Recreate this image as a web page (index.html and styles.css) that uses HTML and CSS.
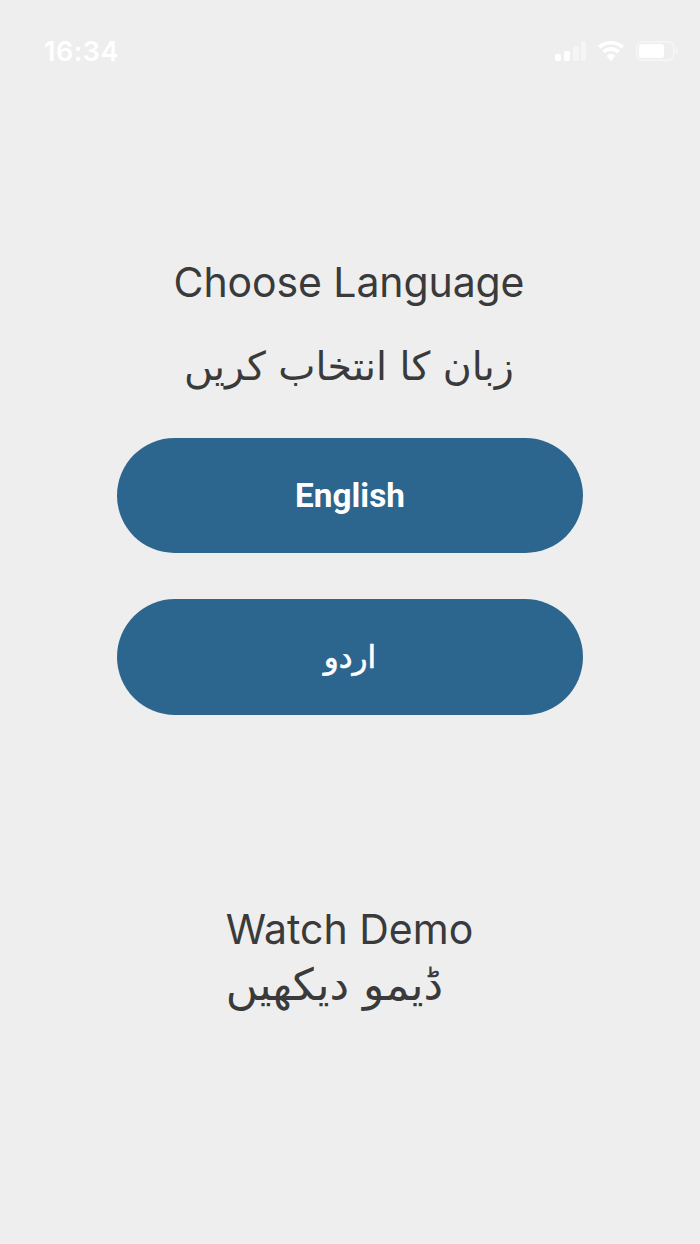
FILE: index.html
```html
<!DOCTYPE html>
<html lang="ur">
<head>
    <meta charset="UTF-8">
    <title>Choose Language</title>
    <link rel="stylesheet" href="styles.css">
</head>
<body>
    <!-- status bar -->
    <div class="status-bar">
        <span class="time">16:34</span>
        <div class="status-icons">
            <svg width="31" height="20" viewBox="0 0 31 20">
                <rect x="0" y="13" width="6" height="7" rx="1.500" fill="#fff"/>
                <rect x="9" y="10" width="6" height="10" rx="1.500" fill="#fff"/>
                <rect x="18" y="5" width="6" height="15" rx="1.500" fill="#fff" opacity="0.4"/>
                <rect x="26" y="0" width="5" height="20" rx="1.500" fill="#fff" opacity="0.4"/>
            </svg>
            <svg width="28" height="21" viewBox="0 0 28 21">
                <path d="M14 3.500c4 0 7.500 1.500 10.400 4.200l2.600-2.900C23.600 1.800 19 0 14 0S4.400 1.800 1 4.800l2.600 2.900C6.500 5 10 3.500 14 3.500z" fill="#fff"/>
                <path d="M14 10c2.400 0 4.600.9 6.200 2.400l2.600-2.900C20.400 7.300 17.400 6 14 6S7.600 7.300 5.200 9.500l2.600 2.900C9.400 10.900 11.600 10 14 10z" fill="#fff"/>
                <path d="M14 13c-1.700 0-3.200.6-4.400 1.700L14 20.500l4.400-5.800C17.200 13.600 15.700 13 14 13z" fill="#fff"/>
            </svg>
            <svg width="42" height="20" viewBox="0 0 42 20">
                <rect x="0.750" y="0.750" width="37" height="18.500" rx="5.500" fill="none" stroke="#fff" stroke-opacity="0.5" stroke-width="1.500"/>
                <rect x="3" y="3" width="25" height="14" rx="3" fill="#fff"/>
                <path d="M40 7c1.200.4 2 1.600 2 3s-.8 2.600-2 3z" fill="#fff" opacity="0.5"/>
            </svg>
        </div>
    </div>

    <div class="content">
        <h1 class="title">Choose Language</h1>
        <h2 class="title-urdu">زبان کا انتخاب کریں</h2>

        <div class="buttons">
            <button class="lang-btn">English</button>
            <button class="lang-btn lang-btn-urdu">اردو</button>
        </div>

        <div class="demo">
            <div class="demo-en">Watch Demo</div>
            <div class="demo-ur">ڈیمو دیکھیں</div>
        </div>
    </div>
</body>
</html>
```

FILE: styles.css
```css
* { box-sizing: border-box; }
html, body { margin: 0; padding: 0; }
body { width: 700px; height: 1244px; overflow: hidden; background: #eeeeee; color: #3a3a3a; font-family: Inter, "Noto Sans", "DejaVu Sans", sans-serif; }

.status-bar { height: 102px; padding: 37px 22px 0 44px; display: flex; justify-content: space-between; align-items: flex-start; }
.time { color: #fff; font-size: 27px; line-height: 30px; font-weight: 600; letter-spacing: 0.5px; }
.status-icons { display: flex; align-items: flex-start; gap: 11px; padding-top: 4px; }

.content { display: flex; flex-direction: column; align-items: center; padding-top: 152px; }
.title { margin: 0 2px 0 0; font-size: 41px; line-height: 56px; font-weight: 400; letter-spacing: -0.1px; }
.title-urdu { margin: 28px 2px 0 0; font-size: 39.500px; line-height: 56px; font-weight: 400; font-family: "DejaVu Sans", sans-serif; direction: rtl; }

.buttons { display: flex; flex-direction: column; gap: 46px; margin-top: 44px; }
.lang-btn { width: 466px; height: 115px; border: none; border-radius: 58px; background: #2c668f; color: #fff; font-family: Roboto, sans-serif; font-size: 33.300px; font-weight: 700; }
.lang-btn-urdu { height: 116px; font-family: "DejaVu Sans", sans-serif; font-size: 31px; font-weight: 400; -webkit-text-stroke: 0.6px #fff; }

.demo { margin-top: 186px; width: 250px; }
.demo-en { font-size: 41px; line-height: 56px; text-align: center; margin-right: 1px; }
.demo-ur { font-size: 44px; line-height: 56px; font-family: "DejaVu Sans", sans-serif; direction: rtl; text-align: right; padding-right: 32px; white-space: nowrap; }
```
